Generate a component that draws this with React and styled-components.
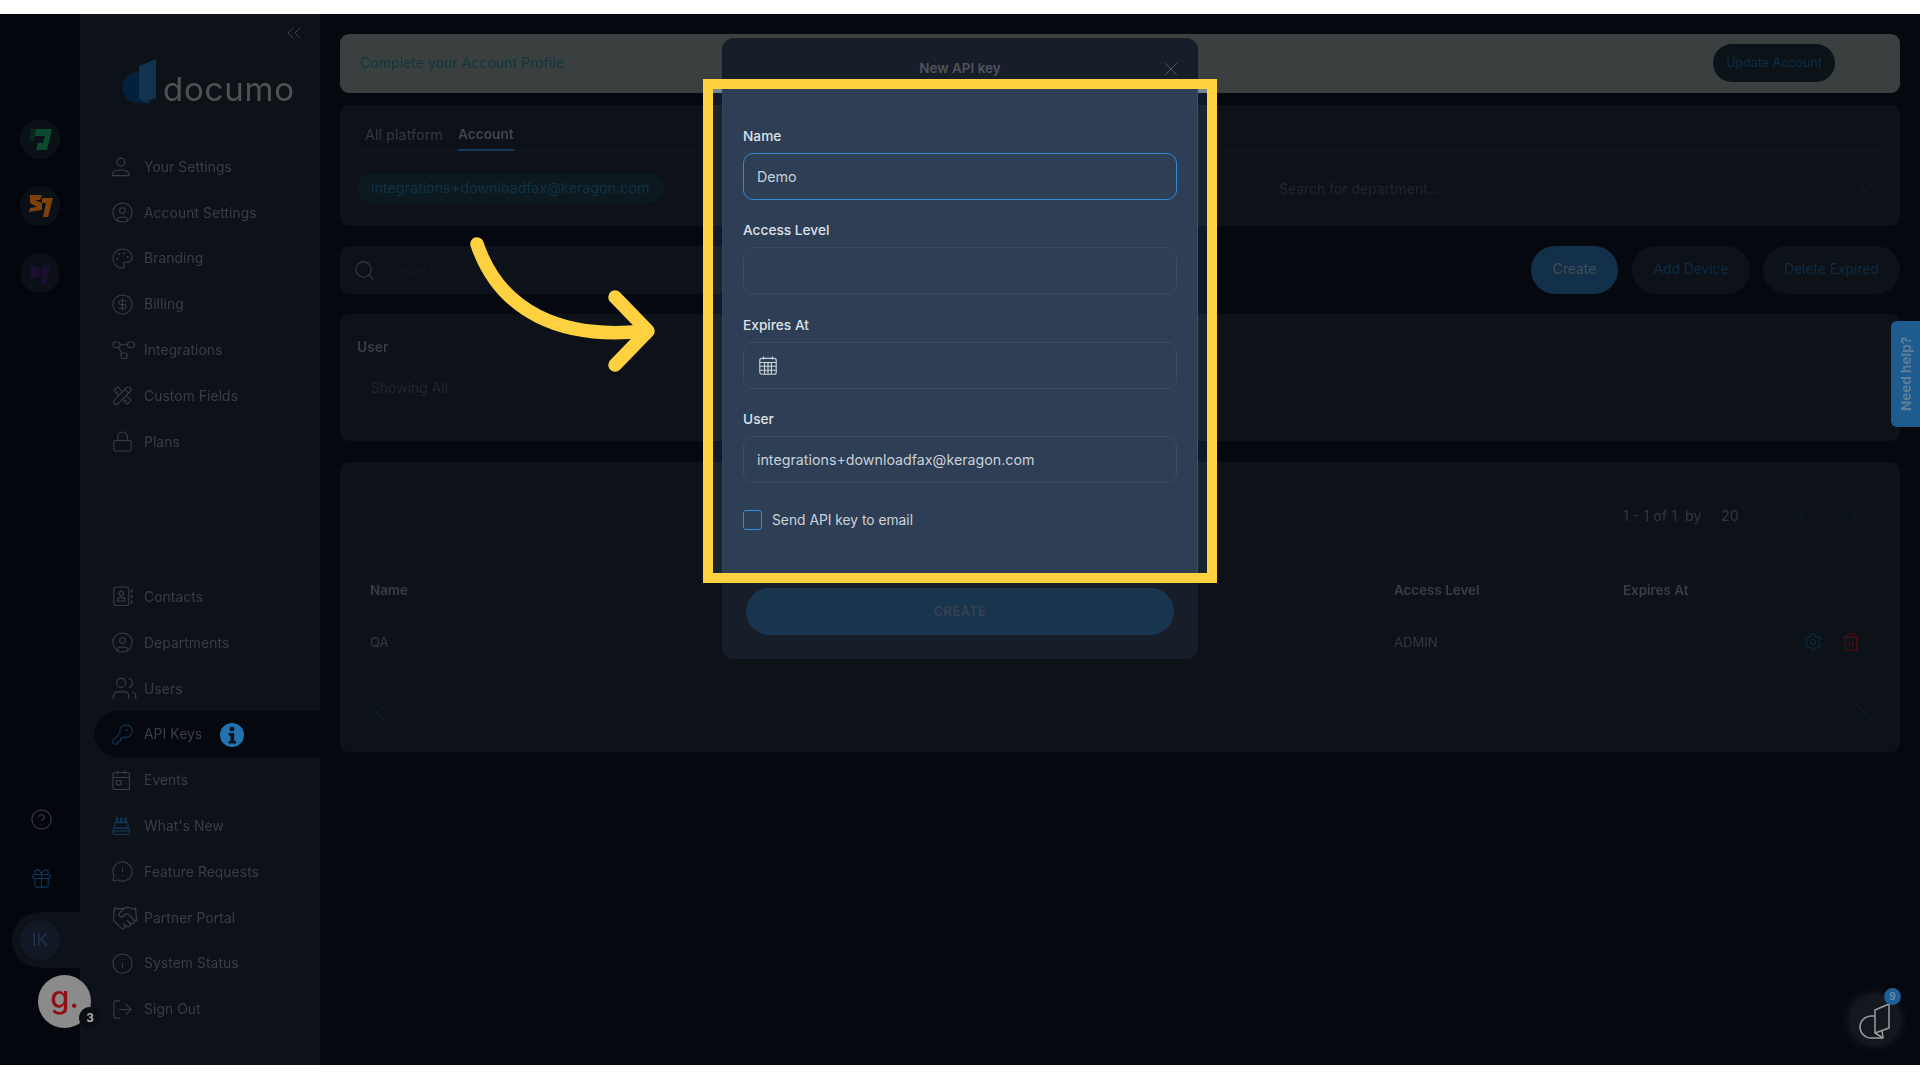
import React from 'react';
import styled, { createGlobalStyle } from 'styled-components';
import {
  CircleUser, Palette, CircleDollarSign, Lock, KeyRound, MessageCircleWarning,
  Handshake, Info, LogOut, CircleHelp, Gift, X, ChevronDown, ChevronLeft, ChevronRight, ChevronsLeft,
  Search, Settings, Trash2, Users,
} from 'lucide-react';
import { TbTools } from 'react-icons/tb';

const FONT = `Inter, "Noto Sans", "Liberation Sans", sans-serif`;

const Global = createGlobalStyle`
  html, body { margin: 0; padding: 0; background: #fff; }
  * { box-sizing: border-box; }
  body { font-family: ${FONT}; }
`;

const Stage = styled.div`
  position: relative;
  width: 1920px;
  height: 1080px;
  padding-top: 14px;
  overflow: hidden;
  background: #fff;
`;
const Shell = styled.div`
  display: flex;
  height: 1051px;
  background: #05090f;
  filter: blur(0.45px);
`;

/* rail */
const Rail = styled.aside`
  position: relative;
  width: 80px;
  flex: none;
  display: flex;
  flex-direction: column;
  align-items: center;
  padding: 105px 0 97px;
  background: #03070d;
`;
const WorkspaceList = styled.div`
  display: flex;
  flex-direction: column;
  gap: 27px;
`;
const Workspace = styled.div`
  width: 40px;
  height: 40px;
  border-radius: 50%;
  background: #0a1016;
  display: flex;
  align-items: center;
  justify-content: center;
`;
const RailIcon = styled.div`
  height: 23px;
  display: flex;
  color: ${p => (p.$accent ? '#12385a' : '#3a3e43')};
  margin-top: ${p => p.$top};
  margin-left: 2px;
`;
const Bubble = styled.div`
  align-self: flex-end;
  width: 68px;
  height: 56px;
  margin-top: 22px;
  padding-left: 8px;
  border-radius: 28px 0 0 28px;
  background: #0c1218;
  display: flex;
  align-items: center;
`;
const Initials = styled.div`
  width: 40px;
  height: 40px;
  border-radius: 50%;
  background: #111925;
  color: #262f4c;
  font-size: 17px;
  display: flex;
  align-items: center;
  justify-content: center;
`;
const Avatar = styled.div`
  position: absolute;
  left: 38px;
  bottom: 37px;
  width: 53px;
  height: 53px;
  border-radius: 50%;
  background: #8b8b8b;
  color: #8f0f14;
  font-size: 31px;
  font-weight: 500;
  line-height: 44px;
  text-align: center;
  z-index: 3;
`;
const AvatarBadge = styled.span`
  position: absolute;
  right: -10px;
  bottom: -1px;
  width: 22px;
  height: 22px;
  border-radius: 50%;
  background: #0a0d12;
  color: #b0b0b0;
  font-size: 12px;
  font-weight: 700;
  line-height: 22px;
`;

/* sidebar */
const Sidebar = styled.aside`
  position: relative;
  width: 240px;
  flex: none;
  display: flex;
  flex-direction: column;
  padding-bottom: 33px;
  background: #0c1218;
`;
const Collapse = styled.div`
  position: absolute;
  top: 7px;
  right: 14px;
  color: #3e4246;
  display: flex;
`;
const Brand = styled.div`
  height: 130px;
  padding: 44px 0 0 42px;
  display: flex;
  align-items: flex-start;
`;
const BrandName = styled.span`
  margin: 10px 0 0 3px;
  font-size: 33px;
  line-height: 42px;
  letter-spacing: 0.8px;
  color: #505152;
`;
const Nav = styled.nav`
  display: flex;
  flex-direction: column;
  &:last-child { margin-top: auto; }
`;
const NavRow = styled.div`
  height: 45.8px;
  margin-left: 14px;
  padding-left: 19px;
  display: flex;
  align-items: center;
  border-radius: 23px 0 0 23px;
  background: ${p => (p.$active ? '#05090f' : 'transparent')};
  color: #3a3e42;
  font-size: 13.8px;
  letter-spacing: 0.1px;
`;
const NavIcon = styled.span`
  width: 33px;
  margin-left: -2px;
  flex: none;
  display: flex;
  color: ${p => (p.$accent ? '#12385a' : '#3a3e42')};
`;
const InfoMark = styled.span`
  display: flex;
  margin-left: 18px;
  margin-top: 2px;
`;

/* main */
const Main = styled.main`
  flex: 1;
  min-width: 0;
  display: flex;
  flex-direction: column;
  padding: 20px 20px 0;
  color: #3a3e42;
`;
const Banner = styled.div`
  height: 59px;
  padding: 0 33px 2px 20px;
  border-radius: 9px;
  background: #3a4040;
  display: flex;
  align-items: center;
  font-size: 14.1px;
  color: #12353e;
`;
const BannerText = styled.span`
  flex: 1;
`;
const UpdateButton = styled.div`
  width: 122px;
  height: 38px;
  margin-right: 18px;
  border-radius: 19px;
  background: #0b1218;
  color: #0e2e48;
  font-size: 12.5px;
  display: flex;
  align-items: center;
  justify-content: center;
`;
const Dismiss = styled.span`
  display: flex;
  color: #343a3a;
`;
const Card = styled.section`
  margin-top: ${p => p.$top || '20px'};
  padding: ${p => p.$pad || '0 17px'};
  height: ${p => p.$h};
  border-radius: 9px;
  background: #0c1218;
`;
const TabBar = styled.div`
  height: 46px;
  padding-left: 8px;
  display: flex;
  gap: 15px;
  border-bottom: 1px solid #13181e;
`;
const Tab = styled.div`
  display: flex;
  align-items: center;
  padding-top: 14px;
  font-size: ${p => (p.$active ? '13.7px' : '14.5px')};
  font-weight: ${p => (p.$active ? 600 : 400)};
  color: ${p => (p.$active ? '#41454a' : '#33383c')};
  border-bottom: 2px solid ${p => (p.$active ? '#12395c' : 'transparent')};
  margin-bottom: -1px;
`;
const FilterRow = styled.div`
  padding-top: 14px;
  display: flex;
  align-items: center;
  justify-content: space-between;
`;
const Chip = styled.div`
  width: 307px;
  height: 29px;
  padding: 0 0 2px 14px;
  border-radius: 15px;
  background: #0c1a20;
  color: #0e3346;
  font-size: 14.3px;
  display: flex;
  align-items: center;
`;
const DarkSelect = styled.div`
  width: ${p => p.$w};
  height: ${p => p.$h};
  padding: 0 9px 0 13px;
  border: 1px solid #11161c;
  border-radius: 9px;
  display: flex;
  align-items: center;
  justify-content: space-between;
  color: #22272b;
  font-size: 13.95px;
`;
const Toolbar = styled.div`
  margin-top: 20px;
  height: 48px;
  display: flex;
  align-items: stretch;
  gap: 13px;
`;
const SearchBox = styled.div`
  width: 700px;
  margin-right: auto;
  padding-left: 13px;
  border-radius: 9px;
  background: #0c1218;
  display: flex;
  align-items: center;
  gap: 15px;
  color: #3a3e42;
`;
const SearchHint = styled.span`
  font-size: 14.3px;
  color: #14191e;
`;
const ToolButton = styled.div`
  width: ${p => p.$w};
  margin-right: ${p => (p.$primary ? '1px' : 0)};
  padding-bottom: 2px;
  border-radius: 24px;
  background: ${p => (p.$primary ? '#12304a' : '#0c1218')};
  color: ${p => (p.$primary ? '#434e54' : '#0e2c46')};
  font-size: 13.8px;
  display: flex;
  align-items: center;
  justify-content: center;
`;
const FieldLabelDark = styled.div`
  height: 20px;
  margin-bottom: 8px;
  font-size: 13.8px;
  font-weight: 600;
  line-height: 20px;
  color: #3a3e42;
`;
const TableGrid = styled.div`
  display: grid;
  grid-template-columns: 1024px 229px 1fr;
  align-items: center;
  padding: ${p => p.$pad || '0 13px'};
  height: ${p => p.$h};
  font-size: ${p => p.$size || '13.1px'};
  font-weight: ${p => p.$weight || 400};
  color: ${p => p.$color || '#34383c'};
`;
const Pager = styled.div`
  grid-column: 3;
  display: flex;
  align-items: center;
  height: 24px;
  font-size: 14.3px;
  color: #33373b;
`;
const PagerCell = styled.span`
  width: ${p => p.$w};
  flex: none;
  display: flex;
  align-items: center;
  color: ${p => (p.$accent ? '#0d2537' : 'inherit')};
`;
const SizeCaret = styled.span`
  display: flex;
  margin-left: 8px;
  color: #191e23;
`;
const Actions = styled.div`
  display: flex;
  justify-content: flex-end;
  gap: 18px;
  padding-right: 9px;
`;
const ActionIcon = styled.span`
  display: flex;
  color: ${p => p.$c};
`;
const RowPager = styled.div`
  height: 81px;
  padding: 3px 9px 0 11px;
  display: flex;
  align-items: center;
  justify-content: space-between;
  color: #0d2537;
`;
const HelpTab = styled.div`
  position: absolute;
  top: 321px;
  right: 0;
  width: 29px;
  height: 106px;
  background: #1e5b8e;
  color: #5d7f9a;
  font-size: 13.5px;
  font-weight: 700;
  writing-mode: vertical-rl;
  transform: rotate(180deg);
  border-radius: 0 6px 6px 0;
  display: flex;
  align-items: center;
  justify-content: center;
`;
const Fab = styled.div`
  position: absolute;
  left: 1849px;
  top: 994px;
  width: 52px;
  height: 52px;
  border-radius: 50%;
  background: #14181e;
  box-shadow: 0 0 10px 2px rgba(255, 255, 255, 0.07);
`;
const FabBadge = styled.span`
  position: absolute;
  top: -6px;
  right: 0;
  width: 17px;
  height: 17px;
  border-radius: 50%;
  background: #1e5f98;
  color: #6e8fab;
  font-size: 10px;
  font-weight: 600;
  line-height: 17px;
  text-align: center;
`;

/* spotlight */
const Lit = styled.div`
  position: absolute;
  left: 713px;
  top: 89px;
  width: 494px;
  height: 484px;
  display: flex;
  justify-content: space-between;
`;
const LitStrip = styled.div`
  width: 9px;
  background: linear-gradient(
    to bottom,
    #76878b 0 4px,
    #0e1a2a 4px 16px,
    #1a2530 16px 137px,
    #0e1a2a 137px ${p => (p.$search ? '157px' : '225px')},
    ${p => (p.$search ? '#1a2530 157px 205px, #0e1a2a 205px 225px,' : '')}
    #1a2530 225px 352px,
    #0e1a2a 352px 373px,
    #1a2530 373px 484px
  );
`;
const Modal = styled.div`
  position: absolute;
  left: 722px;
  top: 38px;
  width: 476px;
  height: 621px;
  display: flex;
  flex-direction: column;
  border-radius: 12px;
  overflow: hidden;
  background: #171e2a;
`;
const ModalHead = styled.header`
  position: relative;
  height: 51px;
  flex: none;
  padding-top: 21px;
  text-align: center;
  font-size: 13.5px;
  font-weight: 600;
  line-height: 18px;
  color: #4f545b;
`;
const ModalClose = styled.span`
  position: absolute;
  top: 20px;
  right: 16px;
  display: flex;
  color: #5a5f66;
`;
const ModalBody = styled.div`
  height: 484px;
  flex: none;
  padding: 37px 20px 0;
  display: flex;
  flex-direction: column;
  gap: 20.6px;
  background: #2d3e55;
  border-right: 1px solid #3b4c63;
  border-left: 1px solid #33445b;
`;
const Field = styled.div`
  display: flex;
  flex-direction: column;
  gap: 6.8px;
`;
const Label = styled.label`
  height: 20px;
  font-size: 13.7px;
  font-weight: 500;
  line-height: 20px;
  color: #dde2e8;
`;
const Control = styled.div`
  flex: none;
  height: 47px;
  padding: 0 7px 0 13px;
  border: ${p => (p.$focus ? '1.5px solid #3589d8' : '1px solid #3a4b62')};
  border-radius: 10px;
  display: flex;
  align-items: center;
  justify-content: space-between;
  color: #c9d0d8;
  font-size: 14.25px;
`;
const ControlIcon = styled.span`
  display: flex;
  color: #3c4c62;
  margin-left: ${p => p.$ml || 0};
`;
const CheckRow = styled.div`
  margin-top: 6.4px;
  display: flex;
  align-items: center;
  gap: 10px;
  font-size: 13.8px;
  color: #cdd3da;
`;
const Check = styled.span`
  width: 19px;
  height: 20px;
  border: 1.5px solid #3589d8;
  border-radius: 3px;
`;
const ModalFoot = styled.footer`
  flex: 1;
  padding: 15px 24px 24px;
`;
const CreateButton = styled.div`
  height: 47px;
  padding-bottom: 2px;
  border-radius: 24px;
  background: #19344d;
  color: #34424f;
  font-size: 13px;
  font-weight: 600;
  letter-spacing: 0.3px;
  display: flex;
  align-items: center;
  justify-content: center;
`;
const Frame = styled.div`
  position: absolute;
  left: 703px;
  top: 79px;
  width: 514px;
  height: 504px;
  border: 10px solid #ffd040;
`;
const ArrowLayer = styled.svg`
  position: absolute;
  left: 460px;
  top: 230px;
`;

const icon = { size: 23, strokeWidth: 1.1 };

const PersonIcon = () => (
  <svg width="20" height="20" viewBox="-2 0 20 20" fill="none" stroke="currentColor" strokeWidth="1.1">
    <circle cx="7.8" cy="5" r="3.9" />
    <path d="M-.5 18.6v-1.2c0-2.7 2.8-4.4 8.3-4.4s8.3 1.7 8.3 4.4v1.2z" strokeLinejoin="round" />
  </svg>
);
const IntegrationsIcon = () => (
  <svg width="25" height="20" viewBox="-2 0 25 20" fill="none" stroke="currentColor" strokeWidth="1.1">
    <rect x="0" y="2" width="7" height="5.5" rx="2.4" />
    <rect x="14.5" y="2" width="7" height="5.5" rx="2.4" />
    <rect x="8" y="13" width="6" height="5.5" rx="1.4" />
    <path d="M7 4.7h7.5M5 7.5l4 5.5" />
  </svg>
);
const ContactIcon = () => (
  <svg width="22" height="21" viewBox="-2 0 22 21" fill="none" stroke="currentColor" strokeWidth="1.1">
    <rect x=".8" y="1" width="15" height="18.5" rx="2.4" />
    <circle cx="8.3" cy="7.6" r="2.2" />
    <path d="M4.3 15c0-2.4 1.7-3.6 4-3.6s4 1.2 4 3.6z" />
    <path d="M18.6 3.5v3M18.6 9v3M18.6 14.5v3" strokeWidth="1.6" />
  </svg>
);
const EventIcon = () => (
  <svg width="20" height="21" viewBox="-2 0 20 21" fill="none" stroke="currentColor" strokeWidth="1.1">
    <rect x="0" y="2.5" width="16.5" height="17" rx="2" />
    <path d="M0 7.5h16.5M4.5 .5v4M12 .5v4" />
    <rect x="3.4" y="10.5" width="4.4" height="4.4" rx=".6" />
  </svg>
);
const CakeIcon = () => (
  <svg width="20" height="21" viewBox="-2 0 20 21" fill="none" stroke="currentColor" strokeWidth="1.1">
    <rect x="0" y="13" width="16.5" height="6.5" rx="1.2" />
    <rect x="1.5" y="7.6" width="13.5" height="5.4" rx="1" />
    <path d="M0 16h16.5" />
    <path d="M4 2.5v5M8.2 2.5v5M12.5 2.5v5" strokeWidth="2.2" />
  </svg>
);
const GridCalendar = () => (
  <svg width="18" height="19" viewBox="0 0 18 19" fill="none" stroke="#ccd3da" strokeWidth="1.15">
    <rect x=".8" y="2.4" width="16.4" height="15.8" rx="2" />
    <path d="M.8 6.5h16.4M.8 10.2h16.4M.8 14.2h16.4M5.6 6.5v11.7M9 6.5v11.7M12.4 6.5v11.7M4.6.6v3M13.4.6v3" />
  </svg>
);
const InfoDot = () => (
  <svg width="24" height="24" viewBox="0 0 24 24">
    <circle cx="12" cy="12" r="12" fill="#2272b2" />
    <circle cx="12" cy="6.2" r="2.4" fill="#0a1119" />
    <path d="M8.6 10h5.6v8h1.9v2.6H8.6V18h1.8v-5.4H8.6z" fill="#0a1119" />
  </svg>
);
const BrandMark = () => (
  <svg width="38" height="48" viewBox="0 0 38 48">
    <path d="M16 14a14 14 0 1 0 0 31h13V14z" fill="#03203f" />
    <path d="M17 8 34 1v39l-9 3 3 3-11-5z" fill="#12344f" />
  </svg>
);
const FabMark = () => (
  <svg width="52" height="52" viewBox="0 0 52 52" fill="none" stroke="#9a9c9e" strokeWidth="1.5" strokeLinejoin="round">
    <path d="M26 16 40 10v24l-14 5z" />
    <path d="M26 22h-4a11 11 0 0 0 0 22h12l-1-7" />
    <path d="M26 39l8 5" />
  </svg>
);
const WorkspaceF = () => (
  <svg width="24" height="24" viewBox="0 0 24 24">
    <path d="M2 2h22l-5 21H8l2-7h5l2-7H3z" fill="#0c4a30" />
    <path d="M2 2h6l-2 12H2z" fill="#08261c" />
  </svg>
);
const WorkspaceS = () => (
  <svg width="26" height="24" viewBox="0 0 26 24">
    <path d="M3 1h12l-2 5H8l7 3v7l-13 2 1-4 7-1-7-4z" fill="#7c4209" />
    <path d="M15 4h11l-5 19h-5l3-14h-4z" fill="#7c4209" />
  </svg>
);
const WorkspaceD = () => (
  <svg width="24" height="24" viewBox="0 0 24 24">
    <path d="M2 5h5c4 0 5 3 5 6s-1 6-5 6H2z" fill="#1a0f2e" />
    <path d="M14 4h9l-5 20h-6l3-10h-3z" fill="#1a0f2e" />
  </svg>
);

const topNav = [
  [PersonIcon, 'Your Settings'],
  [() => <CircleUser {...icon} />, 'Account Settings'],
  [() => <Palette {...icon} />, 'Branding'],
  [() => <CircleDollarSign {...icon} />, 'Billing'],
  [IntegrationsIcon, 'Integrations'],
  [() => <TbTools size={23} strokeWidth={1.1} />, 'Custom Fields'],
  [() => <Lock {...icon} />, 'Plans'],
];
const bottomNav = [
  [ContactIcon, 'Contacts'],
  [() => <CircleUser {...icon} />, 'Departments'],
  [() => <Users size={27} strokeWidth={1} />, 'Users'],
  [() => <KeyRound {...icon} />, 'API Keys', { active: true, accent: true }],
  [EventIcon, 'Events'],
  [CakeIcon, "What's New", { accent: true }],
  [() => <MessageCircleWarning {...icon} />, 'Feature Requests'],
  [() => <Handshake size={28} strokeWidth={1} />, 'Partner Portal'],
  [() => <Info {...icon} />, 'System Status'],
  [() => <LogOut {...icon} />, 'Sign Out'],
];

const NavList = ({ items }) => (
  <Nav>
    {items.map(([Glyph, label, opts = {}]) => (
      <NavRow key={label} $active={opts.active}>
        <NavIcon $accent={opts.accent}><Glyph /></NavIcon>
        {label}
        {opts.active && <InfoMark><InfoDot /></InfoMark>}
      </NavRow>
    ))}
  </Nav>
);

export default function App() {
  return (
    <Stage>
      <Global />
      <Shell>
        <Rail>
          <WorkspaceList>
            <Workspace><WorkspaceF /></Workspace>
            <Workspace><WorkspaceS /></Workspace>
            <Workspace><WorkspaceD /></Workspace>
          </WorkspaceList>
          <RailIcon $top="auto"><CircleHelp {...icon} /></RailIcon>
          <RailIcon $top="36px" $accent><Gift {...icon} /></RailIcon>
          <Bubble><Initials>IK</Initials></Bubble>
          <Avatar>g.<AvatarBadge>3</AvatarBadge></Avatar>
        </Rail>
        <Sidebar>
          <Collapse><ChevronsLeft size={24} strokeWidth={1} /></Collapse>
          <Brand><BrandMark /><BrandName>documo</BrandName></Brand>
          <NavList items={topNav} />
          <NavList items={bottomNav} />
        </Sidebar>
        <Main>
          <Banner>
            <BannerText>Complete your Account Profile</BannerText>
            <UpdateButton>Update Account</UpdateButton>
            <Dismiss><X size={14} strokeWidth={1.25} /></Dismiss>
          </Banner>
          <Card $top="12px" $h="121px">
            <TabBar>
              <Tab>All platform</Tab>
              <Tab $active>Account</Tab>
            </TabBar>
            <FilterRow>
              <Chip>integrations+downloadfax@keragon.com</Chip>
              <DarkSelect $w="618px" $h="47px">
                Search for department...
                <ChevronDown size={16} strokeWidth={1} />
              </DarkSelect>
            </FilterRow>
          </Card>
          <Toolbar>
            <SearchBox>
              <Search size={23} strokeWidth={1.1} />
              <SearchHint>Search...</SearchHint>
            </SearchBox>
            <ToolButton $w="87px" $primary>Create</ToolButton>
            <ToolButton $w="118px">Add Device</ToolButton>
            <ToolButton $w="137px">Delete Expired</ToolButton>
          </Toolbar>
          <Card $h="127px" $pad="23px 17px 0">
            <FieldLabelDark>User</FieldLabelDark>
            <DarkSelect $w="500px" $h="45px">Showing All</DarkSelect>
          </Card>
          <Card $top="21px" $h="290px">
            <TableGrid $h="106px" $pad="41px 13px 41px">
              <Pager>
                <PagerCell $w="62px">1 - 1 of 1</PagerCell>
                <PagerCell $w="36px">by</PagerCell>
                <PagerCell $w="72px">20<SizeCaret><ChevronDown size={12} strokeWidth={1} /></SizeCaret></PagerCell>
                <PagerCell $w="51px" $accent><ChevronLeft size={20} strokeWidth={1} /></PagerCell>
                <PagerCell $w="20px" $accent><ChevronRight size={20} strokeWidth={1} /></PagerCell>
              </Pager>
            </TableGrid>
            <TableGrid $h="44px" $weight="600" $size="13.4px" $color="#3a3e42">
              <span>Name</span>
              <span>Access Level</span>
              <span>Expires At</span>
            </TableGrid>
            <TableGrid $h="59px">
              <span>QA</span>
              <span>ADMIN</span>
              <Actions>
                <ActionIcon $c="#0e2c46"><Settings size={20} strokeWidth={1.25} /></ActionIcon>
                <ActionIcon $c="#5a0d12"><Trash2 size={20} strokeWidth={1.25} /></ActionIcon>
              </Actions>
            </TableGrid>
            <RowPager>
              <ChevronLeft size={24} strokeWidth={1} />
              <ChevronRight size={24} strokeWidth={1} />
            </RowPager>
          </Card>
        </Main>
      </Shell>
      <HelpTab>Need help?</HelpTab>
      <Fab><FabMark /><FabBadge>9</FabBadge></Fab>
      <Lit>
        <LitStrip $search />
        <LitStrip />
      </Lit>
      <Modal>
        <ModalHead>
          New API key
          <ModalClose><X size={22} strokeWidth={1} /></ModalClose>
        </ModalHead>
        <ModalBody>
          <Field>
            <Label>Name</Label>
            <Control $focus>Demo</Control>
          </Field>
          <Field>
            <Label>Access Level</Label>
            <Control>
              <span />
              <ControlIcon><ChevronDown size={18} strokeWidth={1} /></ControlIcon>
            </Control>
          </Field>
          <Field>
            <Label>Expires At</Label>
            <Control>
              <ControlIcon $ml="2px"><GridCalendar /></ControlIcon>
            </Control>
          </Field>
          <Field>
            <Label>User</Label>
            <Control>
              integrations+downloadfax@keragon.com
              <ControlIcon><ChevronDown size={18} strokeWidth={1} /></ControlIcon>
            </Control>
          </Field>
          <CheckRow>
            <Check />
            Send API key to email
          </CheckRow>
        </ModalBody>
        <ModalFoot>
          <CreateButton>CREATE</CreateButton>
        </ModalFoot>
      </Modal>
      <Frame />
      <ArrowLayer width="210" height="160" viewBox="460 230 210 160" fill="none" stroke="#ffd040" strokeWidth="13.5" strokeLinecap="round" strokeLinejoin="round">
        <path d="M477 244C500 312 562 340 644 331" />
        <path d="M615 297L648 331L615 365" />
      </ArrowLayer>
    </Stage>
  );
}
